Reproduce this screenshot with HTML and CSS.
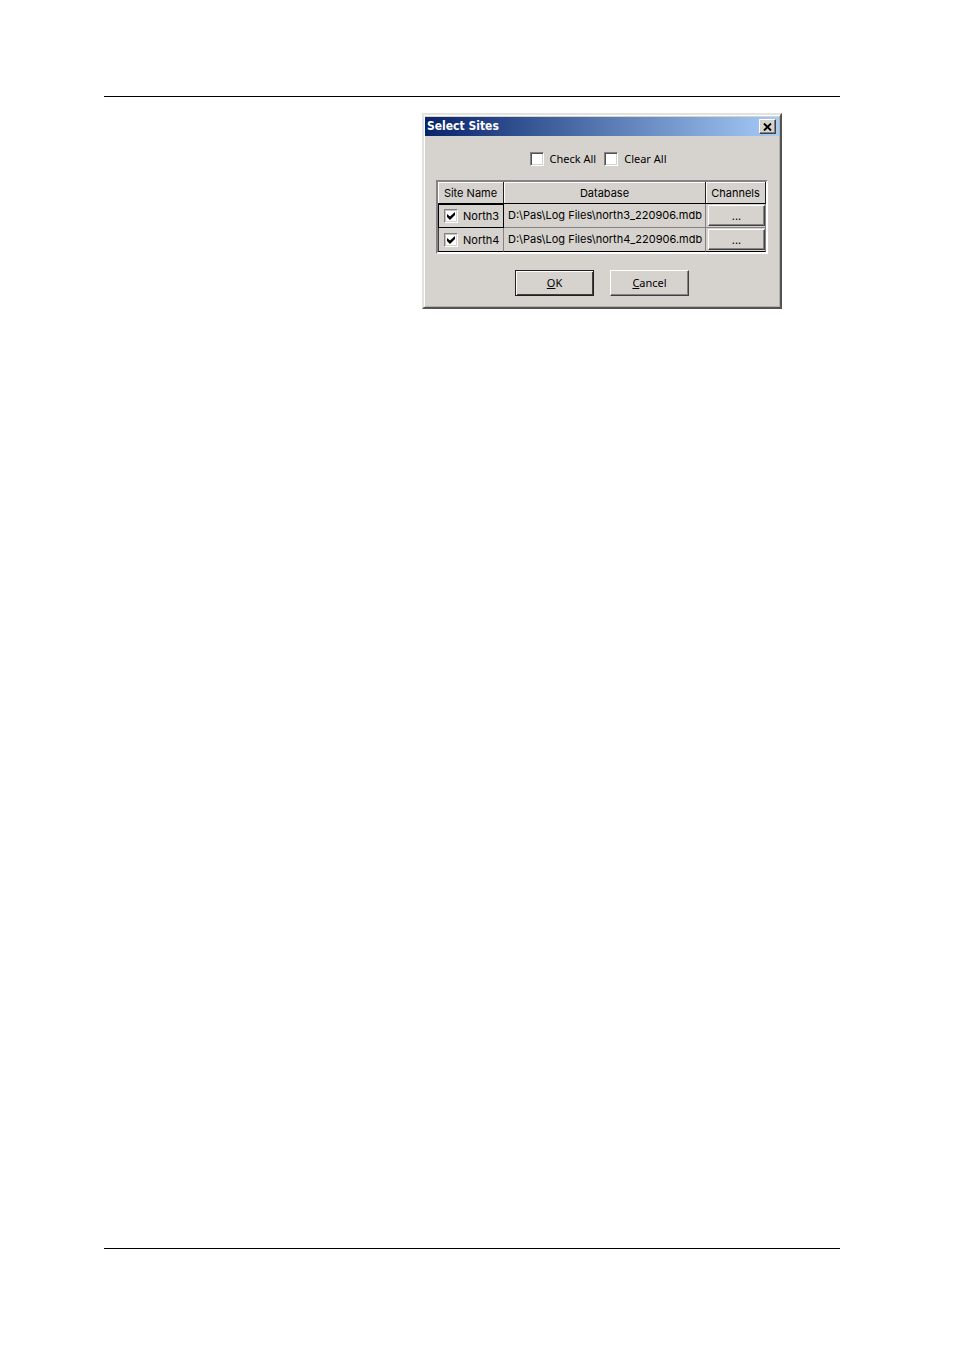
FILE: index.html
```html
<!DOCTYPE html>
<html lang="en">
<head>
  <meta charset="UTF-8">
  <meta name="viewport" content="width=device-width, initial-scale=1.0">
  <title>Select Sites</title>
  <link rel="stylesheet" href="styles.css">
</head>
<body>
  <main class="page">
    <section class="dialog" role="dialog" aria-labelledby="dialog-title">
      <header class="titlebar">
        <h1 id="dialog-title">Select Sites</h1>
        <button class="close" type="button" aria-label="Close">
          <svg width="9" height="8" viewBox="0 0 9 8"><path d="M1 0.5L8 7.5M8 0.5L1 7.5" stroke="#000" stroke-width="1.9"/></svg>
        </button>
      </header>

      <form class="content">
        <div class="options">
          <label><input type="checkbox" name="check-all">Check All</label>
          <label><input type="checkbox" name="clear-all">Clear All</label>
        </div>

        <table class="sites">
          <thead>
            <tr><th class="col-site">Site Name</th><th>Database</th><th class="col-channels">Channels</th></tr>
          </thead>
          <tbody>
            <tr>
              <td class="selected"><label><input type="checkbox" checked>North3</label></td>
              <td class="path">D:\Pas\Log Files\north3_220906.mdb</td>
              <td class="action"><button type="button" aria-label="North3 channels">...</button></td>
            </tr>
            <tr>
              <td><label><input type="checkbox" checked>North4</label></td>
              <td class="path">D:\Pas\Log Files\north4_220906.mdb</td>
              <td class="action"><button type="button" aria-label="North4 channels">...</button></td>
            </tr>
          </tbody>
        </table>

        <div class="buttons">
          <button class="default" type="button"><u>O</u>K</button>
          <button type="button"><u>C</u>ancel</button>
        </div>
      </form>
    </section>
  </main>
</body>
</html>
```

FILE: styles.css
```css
* {
  box-sizing: border-box;
}

body {
  margin: 0;
  background: #fff;
  color: #000;
  font-family: Inter, Arial, sans-serif;
  font-size: 11px;
  line-height: 14px;
}

/* Printed page with a rule at the top and bottom */
.page {
  display: flex;
  flex-direction: column;
  align-items: flex-end;
  min-height: calc(100vh - 198px);
  margin: 96px 114px 102px 104px;
  padding: 16px 58px;
  border-top: 1px solid #000;
  border-bottom: 1px solid #000;
}

.dialog {
  width: 360px;
  padding: 2px 1px 11px;
  background: #d6d3ce;
  border: 2px solid;
  border-color: #e4e2de #55534f #55534f #e4e2de;
  box-shadow: inset 1px 1px #fff, inset -1px -1px #b4b1ac;
}

.titlebar {
  display: flex;
  align-items: center;
  justify-content: space-between;
  height: 19px;
  padding: 0 3px 0 2px;
  background: linear-gradient(to right, #08246b, #a5cbf7);
}

.titlebar h1 {
  margin: 0;
  padding-bottom: 2px;
  color: #fff;
  font: bold 12px/14px "DejaVu Sans Condensed", "DejaVu Sans", Tahoma, sans-serif;
}

button {
  padding: 0;
  color: #000;
  font: inherit;
  background: #d6d3ce;
  border: 1px solid;
  border-color: #fff #404040 #404040 #fff;
  box-shadow: inset -1px -1px #848284;
}

.close {
  display: flex;
  align-items: center;
  justify-content: center;
  width: 17px;
  height: 15px;
}

.content {
  padding: 16px 11px 0;
}

label {
  display: flex;
  align-items: center;
}

input[type="checkbox"] {
  appearance: none;
  flex: none;
  width: 14px;
  height: 14px;
  margin: 0 5px 0 0;
  background: #fff;
  border: 1px solid;
  border-color: #848284 #fff #fff #848284;
  box-shadow: inset 1px 1px #55534f, inset -1px -1px #d6d3ce;
}

.sites input[type="checkbox"] {
  background: #fff url("data:image/svg+xml,%3Csvg xmlns='http://www.w3.org/2000/svg' viewBox='0 0 12 12'%3E%3Cpath d='M2 4L5 6.5L10 2V5L5 10L2 7Z'/%3E%3C/svg%3E") center / 12px 12px no-repeat;
  box-shadow: inset 1px 1px #c6c3be, inset -1px -1px #d6d3ce;
}

.options {
  display: flex;
  justify-content: center;
  gap: 8px;
  margin-bottom: 14px;
  padding-right: 8px;
  font: 11px/14px "Noto Sans", Tahoma, sans-serif;
}

.options input[type="checkbox"] {
  margin-right: 6px;
}

.sites {
  width: 100%;
  table-layout: fixed;
  border-collapse: separate;
  border-spacing: 0;
  border: 2px solid;
  border-color: #848284 #fff #fff #848284;
  box-shadow: inset 1px 1px #404040, inset -1px -1px #404040;
}

.sites th {
  height: 22px;
  padding: 0;
  font-weight: normal;
  border-right: 1px solid #202020;
  border-bottom: 1px solid #000;
  box-shadow: inset 1px 1px #fff;
}

.sites td {
  height: 24px;
  padding: 0 4px;
  white-space: nowrap;
  border-right: 1px solid #848284;
  border-bottom: 1px solid #848284;
}

.sites td:first-child {
  padding-left: 6px;
}

.sites .path {
  padding-bottom: 2px;
}

.sites tr:last-child td {
  border-bottom-color: #000;
}

.sites .col-site {
  width: 66px;
}

.sites .col-channels {
  width: 60px;
}

.sites .selected {
  outline: 1px solid #000;
  outline-offset: -1px;
}

.sites .action {
  padding: 0 0 0 2px;
}

.action button {
  display: block;
  width: 100%;
  height: 21px;
}

.buttons {
  display: flex;
  justify-content: center;
  gap: 16px;
  margin-top: 16px;
  font: 11px/14px "Noto Sans", Tahoma, sans-serif;
}

.buttons button {
  width: 79px;
  height: 26px;
}

.buttons .default {
  border-color: #202020;
  box-shadow: inset 1px 1px #fff, inset -1px -1px #404040;
}
```
